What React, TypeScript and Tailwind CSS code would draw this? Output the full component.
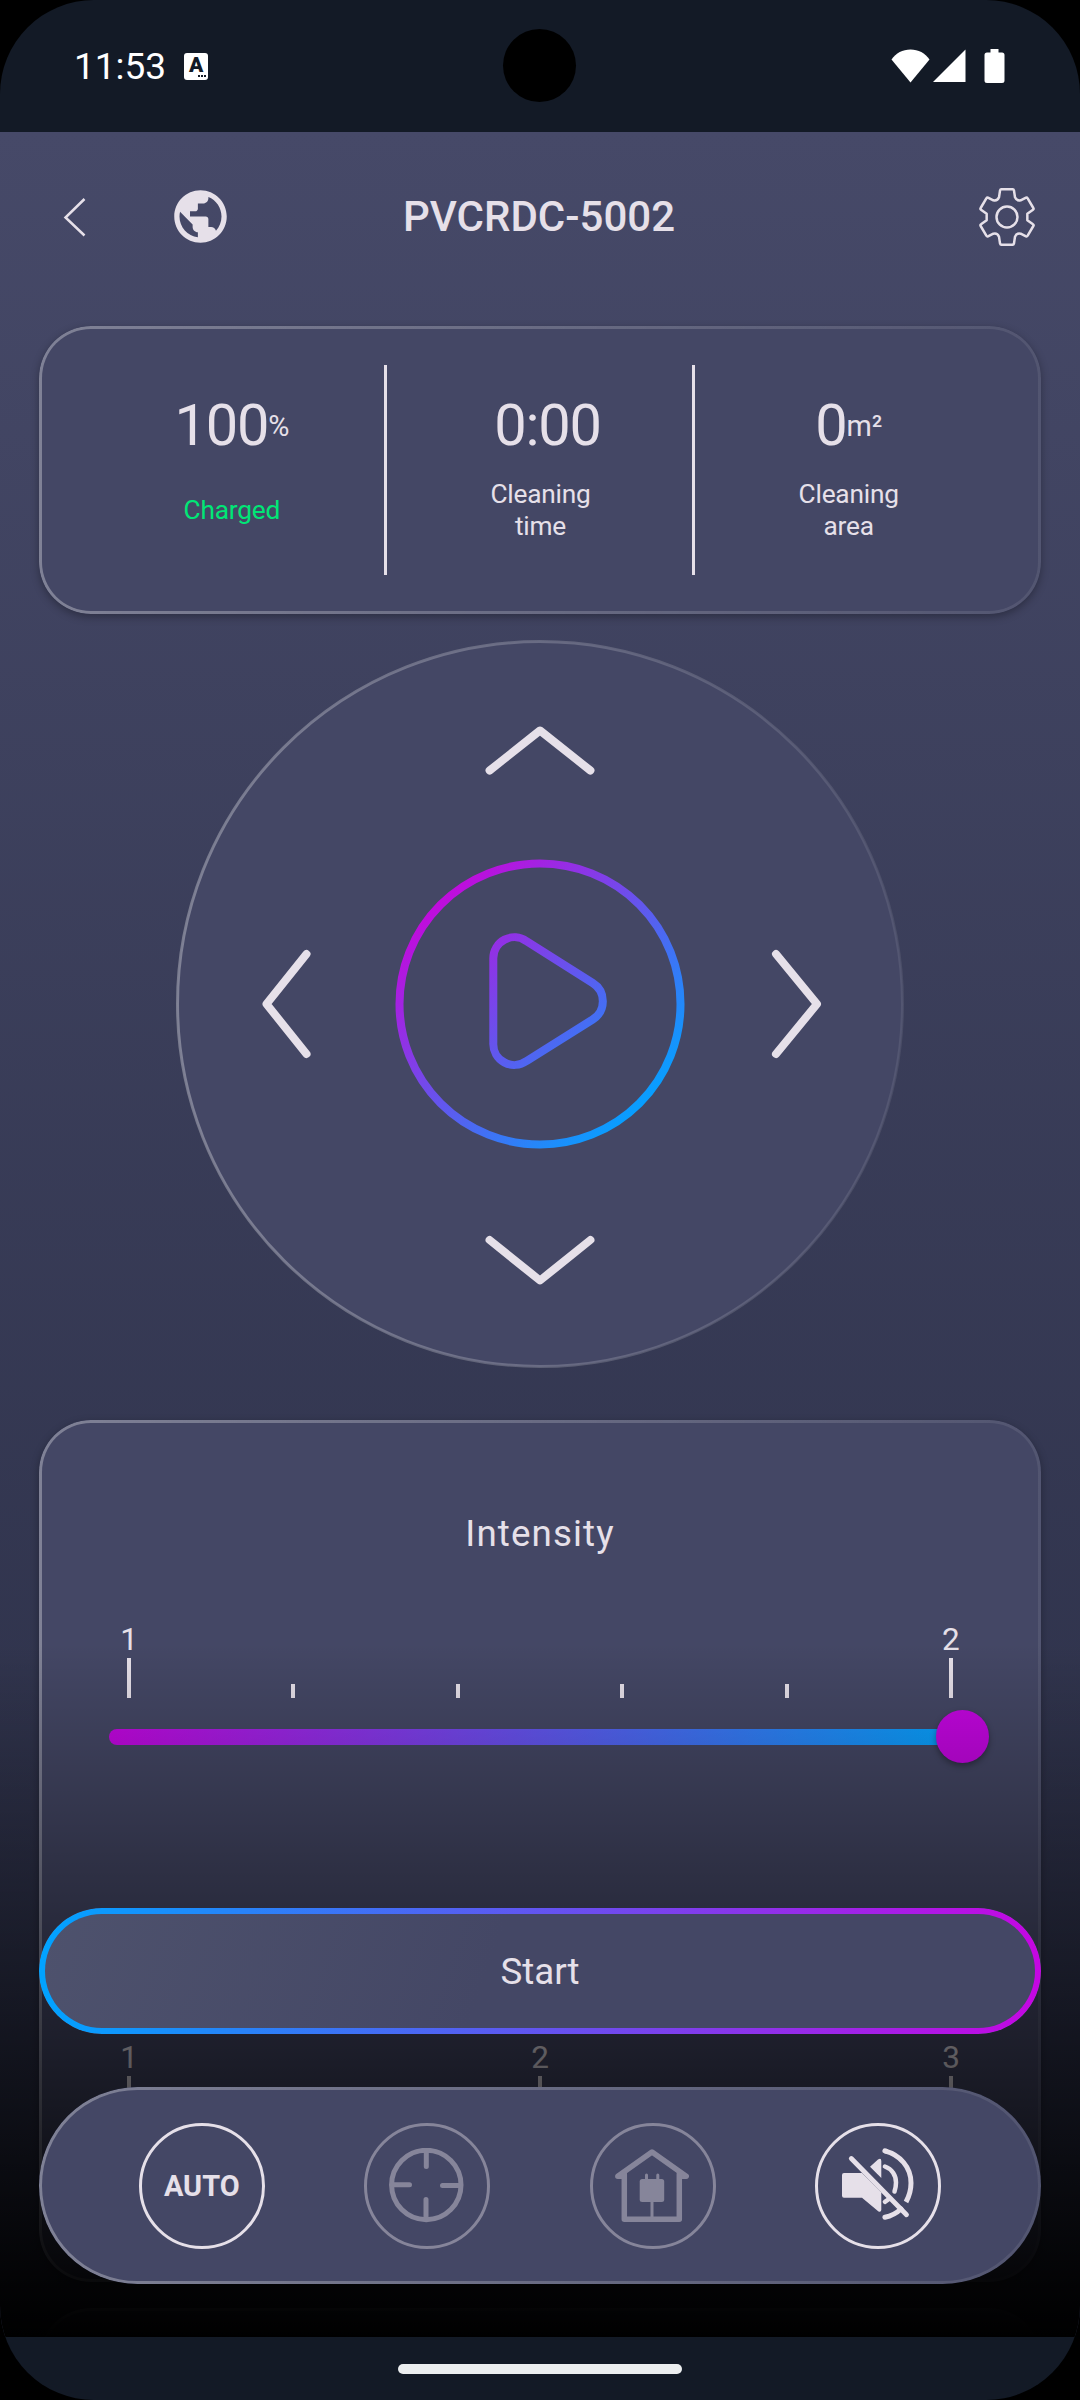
import type { ReactNode } from "react";
import { MdPublic } from "react-icons/md";

const stats = [
  { value: "100", unit: "%", label: ["Charged"], color: "text-[#00e676]" },
  { value: "0:00", unit: "", label: ["Cleaning", "time"], color: "text-[#e6e0e9]" },
  { value: "0", unit: "m²", label: ["Cleaning", "area"], color: "text-[#e6e0e9]" },
];

// Gradient outlines are painted as a masked layer so the fill stays untouched
const outlineMask =
  "pointer-events-none absolute inset-0 [mask:linear-gradient(#000_0_0)_content-box_exclude,linear-gradient(#000_0_0)]";

function CardOutline({ rounded }: { rounded: string }) {
  return (
    <span
      className={`${outlineMask} ${rounded} bg-linear-to-r/srgb from-white/32 to-white/8 p-[3px]`}
    />
  );
}

function StatusBar() {
  return (
    <div className="relative flex h-[132px] shrink-0 items-center justify-between bg-[#131a26] pr-[75px] pl-[74px] text-white">
      <div className="flex items-center gap-[18px]">
        <span className="text-[37px] leading-none">11:53</span>
        <span className="relative flex h-[27px] w-[24px] items-center justify-center rounded-[3px] bg-white text-[21px] leading-none font-black text-[#131a26]">
          <span className="-mt-[2px]">A</span>
          <span className="absolute right-[2px] bottom-[3px] flex gap-[1px]">
            <i className="h-[2px] w-[2px] bg-[#131a26]" />
            <i className="h-[2px] w-[2px] bg-[#131a26]" />
            <i className="h-[2px] w-[2px] bg-[#131a26]" />
          </span>
        </span>
      </div>

      {/* Camera */}
      <span className="absolute top-[29px] left-[503px] h-[73px] w-[73px] rounded-full bg-black" />

      <div className="flex items-center">
        <svg className="h-[34px] w-[39px]" viewBox="0 0 39 34" fill="currentColor">
          <path d="M19.5 33.5 0.5 10.5C5 4 11.5 0.5 19.5 0.5S34 4 38.5 10.5Z" />
        </svg>
        <svg className="ml-[3px] h-[34px] w-[33px]" viewBox="0 0 33 34" fill="currentColor">
          <path d="M32.5 0.5V33H0Z" />
        </svg>
        <svg className="ml-[18px] h-[34px] w-[21px]" viewBox="0 0 21 34" fill="currentColor">
          <path d="M6.5 0h8v3.5H18q2.5 0 2.5 2.5V31.5q0 2.5-2.5 2.5H3Q.5 34 .5 31.5V6Q.5 3.5 3 3.5h3.5Z" />
        </svg>
      </div>
    </div>
  );
}

function GearIcon() {
  return (
    <svg
      className="h-[60px] w-[58px]"
      viewBox="54 51 174 180"
      fill="none"
      stroke="currentColor"
      strokeWidth="7.5"
      strokeLinejoin="round"
    >
      <path d="M124 58H158Q161 58 162 62L165 82Q170 94 182 91L198 83Q201 82 203 85L220 114Q222 117 219 119L202 131V151L219 163Q222 165 220 168L203 197Q201 200 198 199L182 191Q170 188 165 200L162 220Q161 224 158 224H124Q121 224 120 220L117 200Q112 188 100 191L84 199Q81 200 79 197L62 168Q60 165 63 163L80 151V131L63 119Q60 117 62 114L79 85Q81 82 84 83L100 91Q112 94 117 82L120 62Q121 58 124 58Z" />
      <circle cx="141" cy="141" r="31.5" />
    </svg>
  );
}

function Header() {
  return (
    <header className="grid h-[170px] grid-cols-[1fr_auto_1fr] items-center pr-[44px] pl-[45px]">
      <div className="flex items-center">
        <svg
          className="h-[40px] w-[60px]"
          viewBox="0 0 60 40"
          fill="none"
          stroke="currentColor"
          strokeWidth="2.5"
        >
          <path d="M39.5 2 20.5 20.5 39.5 38.5" />
        </svg>
        <MdPublic className="mb-[2px] ml-[64px] h-[63px] w-[63px]" />
      </div>
      <h1 className="pr-[3px] text-[42px] leading-none font-medium">PVCRDC-5002</h1>
      <div className="flex justify-end">
        <GearIcon />
      </div>
    </header>
  );
}

function StatsCard() {
  return (
    <section className="relative mx-[39px] mt-[24px] grid h-[288px] grid-cols-3 items-center rounded-[52px] bg-[#444765] pr-[37px] pl-[39px] shadow-[0_3px_8px_rgba(0,0,0,0.3)]">
      <CardOutline rounded="rounded-[52px]" />
      {stats.map(({ value, unit, label, color }, i) => (
        <div
          key={i}
          className={`flex h-[210px] flex-col items-center pt-[25px] ${i < 2 ? "border-r-[3px] border-[#e6e0e9] pl-[2px]" : "pr-[2px]"}`}
        >
          <div className="flex h-[72px] items-center leading-none">
            <span className={`text-[57.75px] tracking-[-1.2px] ${unit ? "" : "pl-[14px]"}`}>
              {value}
            </span>
            {unit && <span className="text-[28.9px] tracking-[-0.3px]">{unit}</span>}
          </div>
          <div
            className={`flex h-[96px] flex-col justify-center text-center text-[26.25px] leading-[32px] tracking-[-0.2px] ${color}`}
          >
            {label.map((line) => (
              <span key={line}>{line}</span>
            ))}
          </div>
        </div>
      ))}
    </section>
  );
}

function Dial() {
  return (
    <section className="mt-[26px] flex justify-center">
      <svg className="h-[728px] w-[728px]" viewBox="176 640 728 728" fill="none">
        <defs>
          <linearGradient id="rim" x1="176" x2="904" gradientUnits="userSpaceOnUse">
            <stop stopColor="#fff" stopOpacity="0.32" />
            <stop offset="1" stopColor="#fff" stopOpacity="0.08" />
          </linearGradient>
          <linearGradient
            id="accent"
            x1="438"
            y1="902"
            x2="642"
            y2="1106"
            gradientUnits="userSpaceOnUse"
          >
            <stop stopColor="#c00cdc" />
            <stop offset="1" stopColor="#079fff" />
          </linearGradient>
        </defs>
        <circle cx="540" cy="1004" r="363" fill="#444765" />
        <circle cx="540" cy="1004" r="362.5" stroke="url(#rim)" strokeWidth="3" />
        <g stroke="#e6e0e9" strokeWidth="8" strokeLinecap="round" strokeLinejoin="round">
          <path d="M489.6 770.5 540 730.5 590.4 770.5" />
          <path d="M489.6 1240 540 1280.5 590.4 1240" />
          <path d="M306.5 954 266.500 1004 306.5 1054" />
          <path d="M776 954 817 1004 776 1054" />
        </g>
        <g stroke="url(#accent)" strokeWidth="8">
          <circle cx="540" cy="1004" r="140.5" />
          <path d="M493.3 958.5A21 21 0 0 1 526.5 941.2L592.7 983A21.5 21.5 0 0 1 592.7 1019.5L526.5 1061A21 21 0 0 1 493.3 1043Z" />
        </g>
      </svg>
    </section>
  );
}

function Scale({ labels, minor }: { labels: string[]; minor: number }) {
  const steps = (labels.length - 1) * (minor + 1) + 1;
  const ticks = Array.from({ length: steps }, (_, i) => i);

  return (
    <div>
      <div className="mx-[90px] flex h-[77px] items-end justify-between text-[31.5px] leading-none">
        {ticks.map((i) => (
          <div key={i} className="flex w-0 flex-col items-center">
            {i % (minor + 1) === 0 ? (
              <>
                <span>{labels[i / (minor + 1)]}</span>
                <span className="mt-[3px] h-[40px] w-[4px] bg-current" />
              </>
            ) : (
              <span className="h-[14px] w-[4px] bg-current" />
            )}
          </div>
        ))}
      </div>
      <div className="mx-[70px] mt-[12px] flex h-[53px] items-center">
        <span className="h-[16px] flex-1 rounded-l-[8px] bg-linear-to-r/srgb from-[#c506e2] to-[#07a2ff]" />
        <span className="mr-[-18px] -ml-[8px] h-[53px] w-[53px] rounded-full bg-[#c506e2] shadow-[0_3px_6px_rgba(0,0,0,0.35)]" />
      </div>
    </div>
  );
}

function IntensityCard() {
  return (
    <section className="relative mx-[39px] mt-[52px] h-[862px] rounded-[52px] bg-[#444765] pt-[93px] shadow-[0_3px_8px_rgba(0,0,0,0.3)]">
      <CardOutline rounded="rounded-[52px]" />
      <h2 className="text-center text-[36.75px] leading-[42px] tracking-[1.1px]">Intensity</h2>
      <div className="mt-[66px]">
        <Scale labels={["1", "2"]} minor={4} />
      </div>
      <div className="mt-[276px]">
        <Scale labels={["1", "2", "3"]} minor={0} />
      </div>
    </section>
  );
}

function ModeButton({ disabled = false, children }: { disabled?: boolean; children: ReactNode }) {
  return (
    <button
      disabled={disabled}
      className={`flex h-[126px] w-[126px] items-center justify-center rounded-full border-[3px] ${
        disabled ? "border-[#86859a] text-[#86859a]" : "border-[#e6e0e9] text-[#e6e0e9]"
      }`}
    >
      {children}
    </button>
  );
}

function SpotIcon() {
  return (
    <svg
      className="h-[76px] w-[76px]"
      viewBox="0 0 76 76"
      fill="none"
      stroke="currentColor"
      strokeWidth="5"
      strokeLinecap="round"
    >
      <circle cx="37.3" cy="37" r="34.7" />
      <path d="M37.3 3V18.5M37 51.5V70M3 36.7H20.5M53.5 37.5H70" />
    </svg>
  );
}

function HomeIcon() {
  return (
    <svg
      className="h-[76px] w-[76px]"
      viewBox="0 0 76 76"
      fill="none"
      stroke="currentColor"
      strokeWidth="5.5"
      strokeLinecap="round"
      strokeLinejoin="round"
    >
      <path d="M9.3 28.3H2.8L37 4 71.2 28.3H64.7" />
      <path d="M9.3 26V71.3H64.3V26" />
      <path d="M31.5 27V34M42.8 27V34M37 52V70" strokeWidth="3" />
      <rect x="24.7" y="31" width="24.5" height="23" rx="2.5" fill="currentColor" stroke="none" />
    </svg>
  );
}

function MuteIcon() {
  return (
    <svg
      className="h-[76px] w-[76px]"
      viewBox="0 0 76 76"
      fill="none"
      stroke="currentColor"
      strokeWidth="5"
      strokeLinecap="round"
    >
      <path
        d="M4 25H22L41.3 44.5V62Q41 64.5 38.5 63.5L22 49.7H4Q2 49.7 2 47.7V27Q2 25 4 25ZM30 18.7 38 11.5Q41.3 9.5 41.3 13V30Z"
        fill="currentColor"
        stroke="none"
      />
      <path d="M11.3 10.5 66.5 66.7" strokeWidth="4.8" />
      <path d="M44.9 2.9C60 7 71 19 71 35C71 42 69.3 48 66 54" strokeLinecap="butt" />
      <path d="M44.9 2.9 46 3.2M44.9 69.3Q54 67.5 61 61" />
      <path d="M44.9 18.5C52 21 56 27.5 56 34.5Q56 39 54.5 43.5" strokeWidth="4.5" />
      <path d="M44.9 53.8 49 51" strokeWidth="4.5" />
    </svg>
  );
}

export default function App() {
  return (
    <div className="h-[2400px] w-[1080px] overflow-hidden bg-black font-[Roboto,sans-serif] text-[#e6e0e9]">
      <div className="flex h-full flex-col overflow-hidden rounded-[94px]">
        <StatusBar />

        <main className="relative h-[2205px] shrink-0 overflow-hidden bg-linear-to-b/srgb from-[#464968] to-[#282c43]">
          <Header />
          <StatsCard />
          <Dial />
          <IntensityCard />
          {/* Next card, just under the fold */}
          <section className="relative mx-[39px] mt-[26px] h-[300px] rounded-[52px] bg-[#444765]">
            <CardOutline rounded="rounded-[52px]" />
          </section>

          {/* Bottom controls float over the scrolled content */}
          <div className="absolute inset-x-0 bottom-0 flex h-[694px] flex-col justify-end bg-linear-to-b/srgb from-black/0 to-black px-[39px] pb-[53px]">
            <button className="relative mb-[53px] h-[126px] rounded-full bg-[linear-gradient(110deg,#4e526d,#444765_45%)] pt-[2px] text-[36.75px] leading-none">
              <span
                className={`${outlineMask} rounded-full bg-linear-to-r/srgb from-[#00a3ff] to-[#c506e2] p-[6px]`}
              />
              Start
            </button>
            <nav className="relative flex h-[197px] items-center justify-around rounded-full bg-[#444765] px-[50px]">
              <CardOutline rounded="rounded-full" />
              <ModeButton>
                <span className="pt-[1px] text-[28.9px] leading-none font-bold">AUTO</span>
              </ModeButton>
              <ModeButton disabled>
                <SpotIcon />
              </ModeButton>
              <ModeButton disabled>
                <HomeIcon />
              </ModeButton>
              <ModeButton>
                <MuteIcon />
              </ModeButton>
            </nav>
          </div>
        </main>

        <footer className="flex h-[63px] shrink-0 justify-center bg-[#131a26] pt-[27px]">
          <span className="h-[10px] w-[284px] rounded-full bg-[#eceeef]" />
        </footer>
      </div>
    </div>
  );
}
